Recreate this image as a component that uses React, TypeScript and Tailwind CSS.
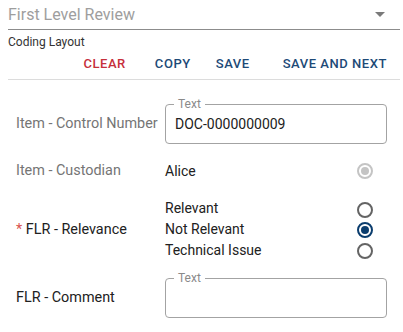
import React from "react";

function Radio({ state }: { state: "off" | "on" | "disabled" }) {
  if (state === "on") {
    return (
      <span className="flex h-[16px] w-[16px] items-center justify-center rounded-full border-2 border-[#0b3d6e]">
        <span className="h-[8px] w-[8px] rounded-full bg-[#0b3d6e]" />
      </span>
    );
  }
  if (state === "disabled") {
    return (
      <span className="flex h-[16px] w-[16px] items-center justify-center rounded-full border-2 border-[#c4c4c4]">
        <span className="h-[8px] w-[8px] rounded-full bg-[#c4c4c4]" />
      </span>
    );
  }
  return <span className="block h-[16px] w-[16px] rounded-full border-2 border-[#646464]" />;
}

function TextBox({ value }: { value?: string }) {
  return (
    <div className="relative flex h-[40px] w-[222px] items-center rounded-[4px] border border-[#a3a3a3] pl-[9px]">
      <span className="absolute left-[8px] top-[-8px] bg-white px-[4px] text-[12px] leading-[14px] text-[#8a8a8a]">
        Text
      </span>
      {value && <span className="text-[14px] text-[#212121]">{value}</span>}
    </div>
  );
}

export default function App() {
  return (
    <div
      className="h-[332px] w-[403px] overflow-hidden bg-white pl-[8px] pr-[3px]"
      style={{ fontFamily: "Roboto, 'Liberation Sans', sans-serif" }}
    >
      <div className="flex h-[30px] items-center justify-between border-b border-[#8c8c8c] pr-[15px]">
        <span className="text-[16px] text-[#9e9e9e]">First Level Review</span>
        <svg width="10" height="5" viewBox="0 0 10 5">
          <path d="M0 0 L10 0 L5 5 Z" fill="#7a7a7a" />
        </svg>
      </div>
      <div className="flex h-[24px] items-center text-[12px] text-[#333333]">Coding Layout</div>
      <div className="flex h-[20px] items-center justify-end pr-[13px] text-[13px] font-medium tracking-[0.55px]">
        <span className="text-[#c62f3b]">CLEAR</span>
        <span className="ml-[29px] text-[#1d4a77]">COPY</span>
        <span className="ml-[25px] text-[#1d4a77]">SAVE</span>
        <span className="ml-[33px] text-[#1d4a77]">SAVE AND NEXT</span>
      </div>
      <div className="mt-[5px] h-[1px] bg-[#dcdcdc]" />

      <div className="pl-[8px] text-[14px]">
        <div className="mt-[24px] flex h-[40px] items-center">
          <div className="w-[149px] text-[14.4px] text-[#757575]">Item - Control Number</div>
          <TextBox value="DOC-0000000009" />
        </div>

        <div className="mt-[7px] flex h-[40px] items-center">
          <div className="w-[149px] text-[14.4px] text-[#757575]">Item - Custodian</div>
          <div className="flex w-[222px] items-center justify-between pr-[14px]">
            <span className="text-[#212121]">Alice</span>
            <Radio state="disabled" />
          </div>
        </div>

        <div className="mt-[7px] flex items-center">
          <div className="w-[149px] text-[14.4px] text-[#212121]">
            <span className="text-[#d9534f]">*</span> FLR - Relevance
          </div>
          <div className="flex w-[222px] flex-col">
            <div className="flex h-[21px] items-center justify-between pr-[14px]">
              <span className="text-[#212121]">Relevant</span>
              <span className="mt-[3px]">
                <Radio state="off" />
              </span>
            </div>
            <div className="flex h-[21px] items-center justify-between pr-[14px]">
              <span className="text-[#212121]">Not Relevant</span>
              <Radio state="on" />
            </div>
            <div className="flex h-[21px] items-center justify-between pr-[14px]">
              <span className="text-[#212121]">Technical Issue</span>
              <Radio state="off" />
            </div>
          </div>
        </div>

        <div className="mt-[17px] flex h-[40px] items-center">
          <div className="w-[149px] text-[14.4px] text-[#212121]">FLR - Comment</div>
          <TextBox />
        </div>
      </div>
    </div>
  );
}
